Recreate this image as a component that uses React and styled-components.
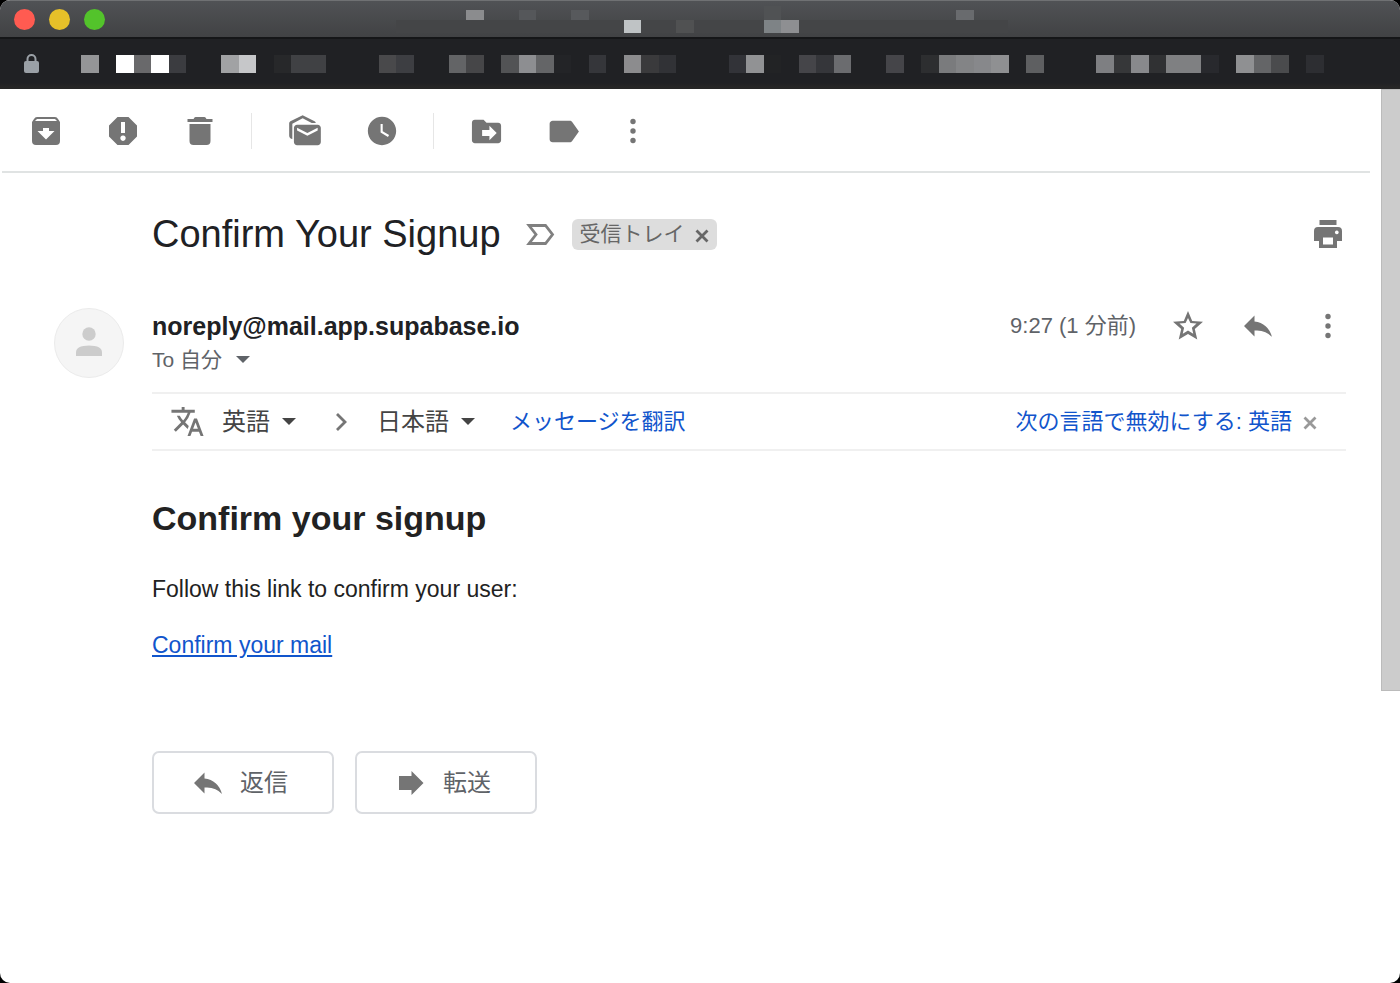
import React from 'react';
import styled, { createGlobalStyle } from 'styled-components';

const GlobalStyle = createGlobalStyle`
  * {
    box-sizing: border-box;
  }

  body {
    margin: 0;
    background: #000000;
    font-family: 'Liberation Sans', 'Noto Sans CJK JP', sans-serif;
    color: #202124;
  }

  button, select {
    font-family: inherit;
  }
`;

const Window = styled.div`
  min-height: 100vh;
  display: flex;
  flex-flow: column nowrap;
  background: #ffffff;
  border-radius: 10px;
  overflow: hidden;
`;

const TitleBar = styled.header`
  height: 39px;
  display: flex;
  flex-flow: row nowrap;
  align-items: flex-start;
  background: linear-gradient(#505255, #414244);
  border-top: 1px solid #6f7173;
  border-bottom: 2px solid #151618;
`;

const Lights = styled.div`
  width: 396px;
  padding: 8px 14px;
  display: flex;
  flex-flow: row nowrap;
  gap: 14px;
`;

const Light = styled.button`
  width: 21px;
  height: 21px;
  padding: 0;
  border: none;
  border-radius: 50%;
  background: ${({ color }) => color};
`;

const AddressBar = styled.div`
  height: 50px;
  padding: 0 24px;
  display: flex;
  flex-flow: row nowrap;
  align-items: center;
  gap: 42px;
  background: linear-gradient(#202124 44px, #262626 48px);
`;

const LockBadge = styled.span`
  display: flex;
  color: #9aa0a6;
`;

const Mosaic = styled.svg`
  display: block;
  flex: none;
`;

const Viewport = styled.div`
  flex: 1;
  display: flex;
  flex-flow: row nowrap;
  align-items: flex-start;
`;

const ScrollThumb = styled.div`
  width: 19px;
  height: 602px;
  background: #cccccc;
  border: 1px solid #bbbbbb;
  border-right: none;
`;

const Main = styled.main`
  flex: 1;
  min-width: 0;
`;

const Toolbar = styled.nav`
  height: 84px;
  margin: 0 11px 0 2px;
  padding: 2px 0 0 5px;
  display: flex;
  flex-flow: row nowrap;
  align-items: center;
  border-bottom: 2px solid #e0e3e3;
`;

const IconButton = styled.button`
  width: ${({ width }) => width || 36}px;
  height: 40px;
  padding: 0;
  border: none;
  background: none;
  color: #757575;
  display: flex;
  align-items: center;
  justify-content: center;
  cursor: pointer;
`;

const Separator = styled.span`
  width: 1px;
  height: 36px;
  margin: 0 14px 0 13px;
  background: #e6e6e6;
`;

const SubjectRow = styled.div`
  height: 122px;
  padding: 0 35px 0 152px;
  display: flex;
  flex-flow: row nowrap;
  align-items: center;
`;

const Subject = styled.h1`
  margin: 0 25px 0 0;
  font-size: 38px;
  line-height: 44px;
  font-weight: 400;
`;

const Chip = styled.span`
  height: 31px;
  margin: 0 auto 0 17px;
  padding: 0 8px;
  display: flex;
  flex-flow: row nowrap;
  align-items: center;
  gap: 10px;
  border-radius: 6px;
  background: #dddddd;
  color: #666666;
  font-size: 21px;
  line-height: 30px;
`;

const ChipClose = styled.button`
  padding: 4px 0 0 0;
  border: none;
  background: none;
  color: #666666;
  display: flex;
`;

const Sender = styled.section`
  height: 97px;
  padding: 13px 35px 0 54px;
  display: flex;
  flex-flow: row nowrap;
  align-items: flex-start;
`;

const Avatar = styled.div`
  width: 70px;
  height: 70px;
  margin: 0 28px 0 0;
  padding: 0 0 2px 0;
  border: 1px solid #ebebeb;
  border-radius: 50%;
  background: #f5f5f5;
  color: #cccccc;
  display: flex;
  align-items: center;
  justify-content: center;
`;

const SenderInfo = styled.div`
  flex: 1;
`;

const SenderName = styled.h2`
  margin: 0;
  font-size: 25px;
  line-height: 36px;
  font-weight: 700;
`;

const Recipient = styled.button`
  padding: 0;
  border: none;
  background: none;
  color: #5f6368;
  font-size: 21px;
  line-height: 32px;
  display: flex;
  align-items: center;
  gap: 14px;
`;

const Meta = styled.div`
  height: 36px;
  display: flex;
  flex-flow: row nowrap;
  align-items: center;
  gap: 34px;
`;

const Time = styled.time`
  color: #5f6368;
  font-size: 22px;
  line-height: 36px;
`;

const TranslateBar = styled.div`
  height: 59px;
  margin: 0 35px 0 152px;
  padding: 0 29px 0 18px;
  display: flex;
  flex-flow: row nowrap;
  align-items: center;
  border-top: 2px solid #f0f0f0;
  border-bottom: 2px solid #f0f0f0;
  color: #757575;
`;

const Language = styled.label`
  margin: 0 0 0 ${({ indent }) => indent}px;
  display: flex;
  flex-flow: row nowrap;
  align-items: center;
  gap: 12px;
  color: #444444;
`;

const LanguageSelect = styled.select`
  appearance: none;
  padding: 0;
  border: none;
  background: none;
  color: #444444;
  font-size: 24px;
  line-height: 36px;
`;

const Chevron = styled.span`
  margin: 0 0 0 33px;
  display: flex;
`;

const TranslateLink = styled.a`
  margin: ${({ $end }) => ($end ? '0 11px 0 auto' : '0 0 0 35px')};
  color: #1155cc;
  font-size: 22px;
  line-height: 32px;
  text-decoration: none;
`;

const Dismiss = styled.button`
  padding: 3px 0 0 0;
  border: none;
  background: none;
  color: #999999;
  display: flex;
`;

const Body = styled.article`
  padding: 47px 35px 0 152px;
  color: #222222;
`;

const BodyTitle = styled.h2`
  margin: 0 0 37px 0;
  font-size: 34px;
  line-height: 40px;
`;

const Paragraph = styled.p`
  margin: 0 0 28px 0;
  font-size: 23px;
  line-height: 28px;
`;

const MailLink = styled.a`
  color: #1155cc;
  text-decoration: underline;
`;

const Actions = styled.div`
  padding: 64px 35px 48px 152px;
  display: flex;
  flex-flow: row nowrap;
  gap: 21px;
`;

const ActionButton = styled.button`
  width: 182px;
  height: 63px;
  padding: 0 8px 0 0;
  display: flex;
  flex-flow: row nowrap;
  align-items: center;
  justify-content: center;
  gap: 14px;
  border: 2px solid #dadce0;
  border-radius: 7px;
  background: #ffffff;
  color: #5f6368;
  font-size: 24px;
  line-height: 36px;

  svg {
    color: #757575;
  }
`;

const Icon = ({ size = 24, height = size, box = `0 0 ${size} ${height}`, d, children }) => (
  <svg width={size} height={height} viewBox={box} fill="currentColor" aria-hidden="true">
    {d && <path fillRule="evenodd" d={d} />}
    {children}
  </svg>
);

const Archive = () => (
  <Icon
    size={36}
    d="M9 4h18q2 0 3 2l2 3v19q0 4-4 4H8q-4 0-4-4V9l2-3q1-2 3-2zM9 6L7 8h22l-2-2zM15 15v3H9.500l8.500 8.500 8.500-8.500H21v-3z"
  />
);

const Report = () => (
  <Icon
    size={36}
    d="M12.500 4h11L32 12.500v11L23.500 32h-11L4 23.500v-11zM16 9v11h4V9zM18 22.500a2.700 2.700 0 1 0 .01 0z"
  />
);

const Trash = () => (
  <Icon size={36} d="M5.500 6h6q1-2 2-2h9q1 0 2 2h6v3h-25zM7.500 11h21v17q0 4-4 4h-13q-4 0-4-4z" />
);

const Unread = () => (
  <Icon
    size={38}
    box="0 0 24 24"
    d="M18.830 7h-2.600L10.500 4 4 7.400V17c-1.100 0-2-.9-2-2V7.170c0-.53.320-1.090.8-1.340L10.500 2l7.540 3.830c.43.230.73.7.79 1.170zM20 8H7c-1.100 0-2 .9-2 2v9c0 1.100.9 2 2 2h13c1.100 0 2-.9 2-2v-9c0-1.100-.9-2-2-2zm0 3.670L13.500 15 7 11.670V10l6.500 3.330L20 10v1.670z"
  />
);

const Clock = () => (
  <Icon
    size={34}
    box="0 0 24 24"
    d="M12 2C6.500 2 2 6.500 2 12s4.500 10 10 10 10-4.500 10-10S17.500 2 12 2zm4.200 14.200L11 13V7h1.500v5.200l4.500 2.700-.8 1.300z"
  />
);

const MoveFolder = () => (
  <Icon
    size={35}
    box="0 0 24 24"
    d="M20 6h-8l-2-2H4c-1.100 0-1.990.9-1.990 2L2 18c0 1.100.9 2 2 2h16c1.100 0 2-.9 2-2V8c0-1.100-.9-2-2-2zm-6 12v-3H9v-4h5V8l5 5-5 5z"
  />
);

const Label = () => (
  <Icon
    size={37}
    box="0 0 24 24"
    d="M17.630 5.840C17.270 5.330 16.670 5 16 5L5 5.010C3.900 5.010 3 5.900 3 7v10c0 1.100.9 1.990 2 1.990L16 19c.67 0 1.270-.33 1.630-.84L22 12l-4.370-6.160z"
  />
);

const More = () => (
  <Icon size={36}>
    <circle cx="18" cy="8.500" r="2.700" />
    <circle cx="18" cy="18" r="2.700" />
    <circle cx="18" cy="27.500" r="2.700" />
  </Icon>
);

const Print = () => (
  <Icon
    size={36}
    d="M9.500 4h17v5h-17zM8 11h20q4 0 4 4v10h-5v7H9V25H4V15q0-4 4-4zM13 21.500v7h10v-7zM26.800 14.500a1.900 1.900 0 1 0 .01 0z"
  />
);

const Star = () => (
  <Icon
    size={36}
    box="0 0 24 24"
    d="M22 9.240l-7.190-.62L12 2 9.190 8.630 2 9.240l5.460 4.730L5.820 21 12 17.270 18.180 21l-1.630-7.030L22 9.240zM12 15l-3.500 2.100.9-4-3.100-2.700 4.100-.35L12 6.700l1.600 3.350 4.100.35-3.100 2.700.9 4L12 15z"
  />
);

const Reply = () => (
  <Icon
    size={36}
    d="M4 18L14.500 7.500v6q13.500 1.500 17.500 15.500-6.500-7.500-17.500-6.500v6z"
  />
);

const Forward = () => <Icon size={36} d="M6 11h12.500V6L30.500 18 18.500 30V25H6z" />;

const Important = () => (
  <Icon size={29} height={23}>
    <path
      d="M3 2.500h16.500l7 9-7 9H3l7-9z"
      fill="none"
      stroke="#808080"
      strokeWidth="2.800"
    />
  </Icon>
);

const Person = () => (
  <Icon size={28} height={30}>
    <circle cx="14" cy="7" r="6.700" />
    <path d="M1 29v-3.500Q1 18.500 14 18.500T27 25.500V29z" />
  </Icon>
);

const Translate = () => (
  <Icon
    size={35}
    box="0 0 24 24"
    d="M12.870 15.070l-2.540-2.510.03-.03A17.520 17.520 0 0014.070 6H17V4h-7V2H8v2H1v2h11.170C11.500 7.920 10.440 9.750 9 11.350 8.070 10.320 7.300 9.190 6.690 8h-2c.73 1.630 1.730 3.170 2.980 4.560l-5.090 5.020L4 19l5-5 3.110 3.110.76-2.040zM18.500 10h-2L12 22h2l1.120-3h4.750L21 22h2l-4.500-12zm-2.620 7l1.620-4.330L19.120 17h-3.240z"
  />
);

const Caret = () => <Icon size={14} height={8} d="M0 0h14L7 7z" />;

const Close = () => (
  <Icon size={14}>
    <path d="M1.500 1.500l11 11m0-11l-11 11" stroke="currentColor" strokeWidth="2.800" />
  </Icon>
);

const Lock = () => (
  <Icon size={15} height={20}>
    <rect x="0" y="7" width="15" height="12" rx="2" />
    <path d="M3.500 8V5a4 4 0 0 1 8 0v3" fill="none" stroke="currentColor" strokeWidth="2" />
  </Icon>
);

// width of one block in the pixelated bars
const CELL = 17.5;

const titleCells = [
  [4, 9, 10, '#8b8c8e'],
  [7, 9, 10, '#55575a'],
  [10, 9, 10, '#57595c'],
  [13, 19, 13, '#bfc3c5'],
  [16, 19, 13, '#505152'],
  [21, 5, 14, '#505254'],
  [21, 19, 13, '#7e8386'],
  [22, 19, 13, '#8e8f92'],
  [32, 9, 10, '#696b6e'],
];

const addressCells = {
  0: '#949597', 2: '#ffffff', 3: '#69696b', 4: '#ffffff', 5: '#3b3c40',
  8: '#a1a2a4', 9: '#c6c7c9', 11: '#27282a', 12: '#404144', 13: '#404144',
  17: '#49494b', 18: '#3d3e42', 21: '#636466', 22: '#464648', 24: '#525355',
  25: '#8d8e91', 26: '#646567', 27: '#232427', 29: '#35363a', 31: '#8c8c8e',
  32: '#3a3a3c', 33: '#313236', 37: '#323338', 38: '#919294', 39: '#222325',
  41: '#454549', 42: '#35363a', 43: '#6b6c6f', 46: '#454549', 48: '#2d2e30',
  49: '#7a7b7d', 50: '#838486', 51: '#87888b', 52: '#8f9092', 54: '#5e5f61',
  58: '#7e7f82', 59: '#363739', 60: '#88898c', 61: '#303133', 62: '#7f8082',
  63: '#7f8082', 64: '#28292d', 66: '#8f9092', 67: '#646567', 68: '#4a4b4d',
  70: '#2d2e32',
};

const App = () => {
  return (
    <>
      <GlobalStyle />
      <Window>
        <TitleBar>
          <Lights>
            <Light color="#ff5b51" aria-label="Close" />
            <Light color="#e6c029" aria-label="Minimize" />
            <Light color="#53c32b" aria-label="Zoom" />
          </Lights>
          <Mosaic width="612" height="36" shapeRendering="crispEdges">
            <rect x="0" y="19" width="612" height="13" fill="#444547" />
            {titleCells.map(([i, y, height, fill]) => (
              <rect key={`${i}-${y}`} x={i * CELL} y={y} width={CELL} height={height} fill={fill} />
            ))}
          </Mosaic>
        </TitleBar>

        <AddressBar>
          <LockBadge>
            <Lock />
          </LockBadge>
          <Mosaic width="1243" height="18" shapeRendering="crispEdges">
            {Object.entries(addressCells).map(([i, fill]) => (
              <rect key={i} x={i * CELL} y="0" width={CELL} height="18" fill={fill} />
            ))}
          </Mosaic>
        </AddressBar>

        <Viewport>
          <Main>
            <Toolbar>
              <IconButton width={77} aria-label="アーカイブ"><Archive /></IconButton>
              <IconButton width={77} aria-label="迷惑メールを報告"><Report /></IconButton>
              <IconButton width={77} aria-label="削除"><Trash /></IconButton>
              <Separator />
              <IconButton width={77} aria-label="未読にする"><Unread /></IconButton>
              <IconButton width={77} aria-label="スヌーズ"><Clock /></IconButton>
              <Separator />
              <IconButton width={77} aria-label="移動"><MoveFolder /></IconButton>
              <IconButton width={77} aria-label="ラベル"><Label /></IconButton>
              <IconButton width={62} aria-label="その他"><More /></IconButton>
            </Toolbar>

            <SubjectRow>
              <Subject>Confirm Your Signup</Subject>
              <Important />
              <Chip>
                受信トレイ
                <ChipClose aria-label="ラベルを削除"><Close /></ChipClose>
              </Chip>
              <IconButton aria-label="印刷"><Print /></IconButton>
            </SubjectRow>

            <Sender>
              <Avatar><Person /></Avatar>
              <SenderInfo>
                <SenderName>noreply@mail.app.supabase.io</SenderName>
                <Recipient>
                  To 自分
                  <Caret />
                </Recipient>
              </SenderInfo>
              <Meta>
                <Time>9:27 (1 分前)</Time>
                <IconButton aria-label="スター"><Star /></IconButton>
                <IconButton aria-label="返信"><Reply /></IconButton>
                <IconButton aria-label="その他"><More /></IconButton>
              </Meta>
            </Sender>

            <TranslateBar>
              <Translate />
              <Language indent={17}>
                <LanguageSelect aria-label="翻訳元の言語">
                  <option>英語</option>
                </LanguageSelect>
                <Caret />
              </Language>
              <Chevron>
                <Icon size={24}>
                  <path d="M8 4l8 8-8 8" fill="none" stroke="currentColor" strokeWidth="2.800" />
                </Icon>
              </Chevron>
              <Language indent={24}>
                <LanguageSelect aria-label="翻訳先の言語">
                  <option>日本語</option>
                </LanguageSelect>
                <Caret />
              </Language>
              <TranslateLink href="#translate">メッセージを翻訳</TranslateLink>
              <TranslateLink href="#disable" $end>次の言語で無効にする: 英語</TranslateLink>
              <Dismiss aria-label="閉じる"><Close /></Dismiss>
            </TranslateBar>

            <Body>
              <BodyTitle>Confirm your signup</BodyTitle>
              <Paragraph>Follow this link to confirm your user:</Paragraph>
              <Paragraph>
                <MailLink href="#confirm">Confirm your mail</MailLink>
              </Paragraph>
            </Body>

            <Actions>
              <ActionButton>
                <Reply />
                返信
              </ActionButton>
              <ActionButton>
                <Forward />
                転送
              </ActionButton>
            </Actions>
          </Main>
          <ScrollThumb />
        </Viewport>
      </Window>
    </>
  );
};

export default App;
